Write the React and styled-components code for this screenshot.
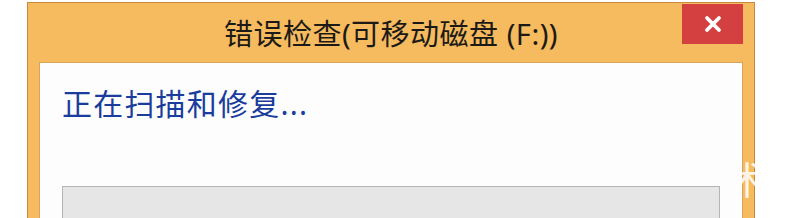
import React from "react";
import styled, { createGlobalStyle } from "styled-components";

const FONT = `"Noto Sans", "Noto Sans CJK SC", sans-serif`;

const GlobalStyle = createGlobalStyle`
  html, body {
    margin: 0;
    padding: 0;
    background: #ffffff;
    overflow: hidden;
  }
  body {
    font-family: ${FONT};
  }
`;

const Page = styled.div`
  width: 790px;
  height: 218px;
  overflow: hidden;
  padding: 2px 0 0 27px;
  box-sizing: border-box;
`;

const Window = styled.div`
  position: relative;
  width: 728px;
  height: 260px;
  box-sizing: border-box;
  background: #f6ba5f;
  border: 1px solid #c48a3e;
  padding: 0 11px;
  display: flex;
  flex-direction: column;
`;

const TitleBar = styled.div`
  height: 59px;
  display: flex;
  align-items: center;
  justify-content: center;
  padding-bottom: 2px;
  box-sizing: border-box;
`;

const Title = styled.h1`
  margin: 0;
  font-family: ${FONT};
  font-weight: 400;
  font-size: 29px;
  color: #1c1a16;
  letter-spacing: 0.5px;
`;

const CloseButton = styled.button`
  position: absolute;
  top: 1px;
  right: 11px;
  width: 61px;
  height: 40px;
  border: none;
  background: #d4403f;
  color: #ffffff;
  display: flex;
  align-items: center;
  justify-content: center;
  padding: 0;
  cursor: pointer;
`;

const Panel = styled.div`
  flex: 1;
  background: #fdfdfd;
  border: 1px solid #d9a35a;
  padding: 21px 22px 0 22px;
  display: flex;
  flex-direction: column;
`;

const Status = styled.div`
  font-family: ${FONT};
  font-size: 30px;
  line-height: 40px;
  color: #1a3c9c;
  letter-spacing: 1.2px;
`;

const ProgressTrack = styled.div`
  margin-top: 62px;
  height: 34px;
  background: #e6e6e6;
  border: 1px solid #b4b4b4;
`;

const Watermark = styled.span`
  position: absolute;
  right: -12px;
  top: 156px;
  font-family: "Noto Sans CJK SC", sans-serif;
  font-size: 38px;
  color: rgba(255, 255, 255, 0.85);
  line-height: 1;
`;

export default function App() {
  return (
    <>
      <GlobalStyle />
      <Page>
        <Window>
          <TitleBar>
            <Title>错误检查(可移动磁盘 (F:))</Title>
          </TitleBar>
          <CloseButton aria-label="关闭">
            <svg width="20" height="18" viewBox="0 0 20 18">
              <path
                d="M4 3 L16 15 M16 3 L4 15"
                stroke="#ffffff"
                strokeWidth="3.8"
                strokeLinecap="round"
              />
            </svg>
          </CloseButton>
          <Panel>
            <Status>正在扫描和修复...</Status>
            <ProgressTrack />
          </Panel>
          <Watermark>术</Watermark>
        </Window>
      </Page>
    </>
  );
}
